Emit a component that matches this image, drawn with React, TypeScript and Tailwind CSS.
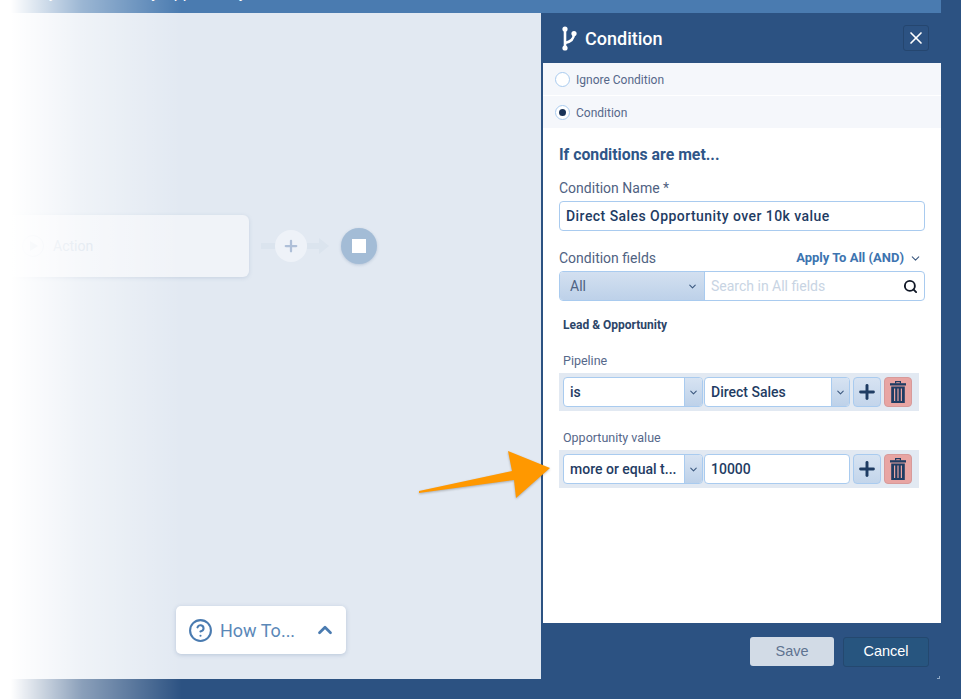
import { ChevronDown, ChevronUp, CircleHelp, Plus, Search, X } from "lucide-react";

function TrashIcon() {
  return (
    <svg width="16" height="22" viewBox="0 0 16 22" fill="#1f3c63">
      <path d="M5 0h6v2.5H9.8V1.2H6.2v1.3H5z" />
      <rect x="0" y="2.2" width="16" height="2.3" />
      <path d="M1.2 5.5h13.6V22H1.2zM4 7.5v12.5h1.2V7.5zM7.4 7.5v12.5h1.2V7.5zM10.8 7.5v12.5H12V7.5z" fillRule="evenodd" />
    </svg>
  );
}

function BranchIcon() {
  return (
    <svg width="16" height="25" viewBox="0 0 16 25" fill="none" stroke="#ffffff">
      <path d="M4 3v19" strokeWidth="2.6" />
      <path d="M4 17c5-1 9-3.500 9-9.500" strokeWidth="2.6" />
      <circle cx="4" cy="3" r="2.6" fill="#ffffff" strokeWidth="0" />
      <circle cx="4" cy="22" r="2.6" fill="#ffffff" strokeWidth="0" />
      <circle cx="13" cy="7.500" r="2.6" fill="#ffffff" strokeWidth="0" />
    </svg>
  );
}

function SelectBox({ text, width }: { text: string; width: string }) {
  return (
    <div className={`flex h-[30px] ${width} overflow-hidden rounded-[4px] border border-[#a9cbef] bg-white`}>
      <div className="flex-1 truncate pl-[6px] text-[14px] font-medium leading-[28px] text-[#1f3c63]">{text}</div>
      <div className="flex w-[18px] items-center justify-center border-l border-[#a9cbef] bg-gradient-to-b from-[#d7e3f2] to-[#bdd1e9]">
        <ChevronDown className="h-[11px] w-[11px] text-[#3d5a80]" strokeWidth={2.4} />
      </div>
    </div>
  );
}

function ActionButtons() {
  return (
    <>
      <button className="ml-[3px] flex h-[30px] w-[28px] items-center justify-center rounded-[4px] border border-[#a9cbef] bg-gradient-to-b from-[#d7e3f2] to-[#c3d5eb]">
        <Plus className="h-[22px] w-[22px] text-[#1f3c63]" strokeWidth={3.2} />
      </button>
      <button className="ml-[3px] flex h-[30px] w-[28px] items-center justify-center rounded-[4px] border border-[#d79a9a] bg-[#e8a5a3]">
        <TrashIcon />
      </button>
    </>
  );
}

function RadioRow({ label, checked }: { label: string; checked?: boolean }) {
  return (
    <div className="flex h-[32px] items-center bg-[#f5f7fb] pl-[12px]">
      <div className="flex h-[15px] w-[15px] items-center justify-center rounded-full border border-[#a9cbef] bg-white">
        {checked && <div className="h-[7px] w-[7px] rounded-full bg-[#1a3358]" />}
      </div>
      <span className="ml-[6px] mt-[2px] text-[12px] text-[#56688a]">{label}</span>
    </div>
  );
}

export default function App() {
  return (
    <div className="relative flex h-[699px] w-[961px] flex-col overflow-hidden bg-[#2c5282] font-['Roboto',sans-serif]">
      {/* top bar, only the bottom of the title shows */}
      <div className="h-[13px] w-[941px] overflow-hidden bg-[#4a7bb0]">
        <div className="-mt-[17px] whitespace-nowrap pl-[25px] text-[16px] leading-[20px] text-white">
          <span>Only</span>
          <span className="ml-[86px]">by Opportunity</span>
        </div>
      </div>

      <div className="flex flex-1">
        {/* canvas */}
        <div className="flex h-[666px] w-[541px] flex-col bg-[#e2e9f2]">
          <div className="mt-[202px] flex items-center">
            <div className="flex h-[62px] w-[249px] items-center rounded-r-[6px] bg-[#f0f3f8] pl-[22px] shadow-[0_1px_4px_rgba(90,120,160,0.2)]">
              <div className="flex h-[22px] w-[22px] items-center justify-center rounded-full border border-[#dfe6f0]">
                <div className="ml-[2px] h-0 w-0 border-y-[5px] border-l-[8px] border-y-transparent border-l-[#d3dde9]" />
              </div>
              <span className="ml-[9px] text-[14px] text-[#d3dde9]">Action</span>
            </div>
            <div className="ml-[12px] h-[6px] w-[16px] bg-[#dbe4ee]" />
            <div className="-ml-[2px] flex h-[32px] w-[32px] items-center justify-center rounded-full bg-[#eef2f8]">
              <Plus className="h-[18px] w-[18px] text-[#aebfd8]" strokeWidth={3} />
            </div>
            <div className="h-[6px] w-[12px] bg-[#dbe4ee]" />
            <div className="h-0 w-0 border-y-[8px] border-l-[10px] border-y-transparent border-l-[#dbe4ee]" />
            <div className="ml-[12px] flex h-[36px] w-[36px] items-center justify-center rounded-full bg-[#a3bcd6] shadow-[0_1px_3px_rgba(90,120,160,0.3)]">
              <div className="h-[14px] w-[14px] bg-white" />
            </div>
          </div>
          <div className="ml-[176px] mt-[329px] flex h-[48px] w-[170px] items-center rounded-[5px] bg-white pl-[12px] shadow-[0_1px_4px_rgba(90,120,160,0.3)]">
            <CircleHelp className="h-[25px] w-[25px] text-[#4a7bb0]" strokeWidth={2} />
            <span className="ml-[7px] text-[18px] text-[#5b88b8]">How To...</span>
            <ChevronUp className="ml-[19px] h-[22px] w-[22px] text-[#4a7bb0]" strokeWidth={3} />
          </div>
        </div>

        {/* condition panel */}
        <div className="flex w-[400px] flex-col">
          <div className="flex h-[50px] items-center pl-[20px] pr-[12px]">
            <BranchIcon />
            <span className="ml-[8px] text-[18px] font-medium text-white">Condition</span>
            <button className="ml-auto flex h-[26px] w-[26px] items-center justify-center rounded-[3px] border border-[#25466f] bg-[#2c5282]">
              <X className="h-[20px] w-[20px] text-white" strokeWidth={2} />
            </button>
          </div>

          <div className="ml-[2px] flex h-[560px] flex-col bg-white">
            <RadioRow label="Ignore Condition" />
            <div className="h-px bg-white" />
            <RadioRow label="Condition" checked />

            <div className="flex flex-col px-[16px]">
              <h2 className="mt-[17px] h-[20px] text-[15.8px] font-bold leading-[20px] text-[#2f5688]">If conditions are met...</h2>
              <div className="mt-[14px] h-[18px] text-[14px] leading-[18px] text-[#4f6282]">Condition Name *</div>
              <div className="mt-[4px] h-[30px] rounded-[4px] border border-[#a9cbef] pl-[6px] text-[14px] font-medium leading-[28px] tracking-[0.45px] text-[#1f3c63]">
                Direct Sales Opportunity over 10k value
              </div>

              <div className="mt-[18px] flex h-[18px] items-center">
                <span className="text-[14px] text-[#4f6282]">Condition fields</span>
                <span className="ml-auto text-[13px] font-bold text-[#3d74b0]">Apply To All (AND)</span>
                <ChevronDown className="ml-[5px] mr-[3px] h-[13px] w-[13px] text-[#3d5a80]" strokeWidth={2} />
              </div>
              <div className="mt-[4px] flex h-[30px] overflow-hidden rounded-[4px] border border-[#a9cbef]">
                <div className="flex w-[145px] items-center border-r border-[#a9cbef] bg-gradient-to-b from-[#d3e0f0] to-[#bdd1e9] pl-[10px] pr-[6px]">
                  <span className="text-[14px] text-[#4f6282]">All</span>
                  <ChevronDown className="ml-auto h-[11px] w-[11px] text-[#3d5a80]" strokeWidth={2.4} />
                </div>
                <div className="flex flex-1 items-center pl-[6px] pr-[6px]">
                  <span className="text-[14px] text-[#c8d4e3]">Search in All fields</span>
                  <Search className="ml-auto h-[15px] w-[15px] text-[#111827]" strokeWidth={3} />
                </div>
              </div>

              <div className="ml-[4px] mt-[16px] h-[16px] text-[12px] font-bold leading-[16px] text-[#2c4568]">Lead &amp; Opportunity</div>

              <div className="ml-[4px] mt-[20px] h-[16px] text-[12.5px] leading-[16px] text-[#56688a]">Pipeline</div>
              <div className="mt-[4px] flex h-[38px] w-[360px] items-center bg-[#e2e9f2] pl-[4px]">
                <SelectBox text="is" width="w-[140px]" />
                <div className="ml-[1px]">
                  <SelectBox text="Direct Sales" width="w-[146px]" />
                </div>
                <ActionButtons />
              </div>

              <div className="ml-[4px] mt-[19px] h-[16px] text-[12.5px] leading-[16px] text-[#56688a]">Opportunity value</div>
              <div className="mt-[4px] flex h-[38px] w-[360px] items-center bg-[#e2e9f2] pl-[4px]">
                <SelectBox text="more or equal t..." width="w-[140px]" />
                <div className="ml-[1px] h-[30px] w-[146px] rounded-[4px] border border-[#a9cbef] bg-white pl-[6px] text-[14px] font-medium leading-[28px] text-[#1f3c63]">
                  10000
                </div>
                <ActionButtons />
              </div>
            </div>
          </div>

          <div className="flex flex-1 items-start justify-end pr-[12px] pt-[14px] font-['Liberation_Sans',sans-serif]">
            <button className="h-[29px] w-[84px] rounded-[3px] bg-[#d2dbe6] text-[14.5px] text-[#5f7391]">Save</button>
            <button className="ml-[9px] h-[30px] w-[86px] rounded-[3px] border border-[#24486f] bg-[#27557f] text-[14.5px] text-white">Cancel</button>
          </div>
        </div>
      </div>

      {/* the fade sits over everything on the left */}
      <div className="absolute inset-y-0 left-0 w-[182px] bg-gradient-to-r from-white from-[6%] via-white/45 via-[45%] to-transparent" />

      {/* callout arrow */}
      <svg className="absolute left-[415px] top-[448px] drop-shadow-[0_1px_1px_rgba(60,60,60,0.35)]" width="140" height="54" viewBox="0 0 140 54">
        <polygon points="4,43 97,23 93,3 135,20 101,50 99,32 4,45" fill="#ff9800" />
      </svg>

      {/* resize grip */}
      <div className="absolute left-[937px] top-[676px] h-[3px] w-[3px] border-b border-r border-[#8fa8c4]" />
    </div>
  );
}
